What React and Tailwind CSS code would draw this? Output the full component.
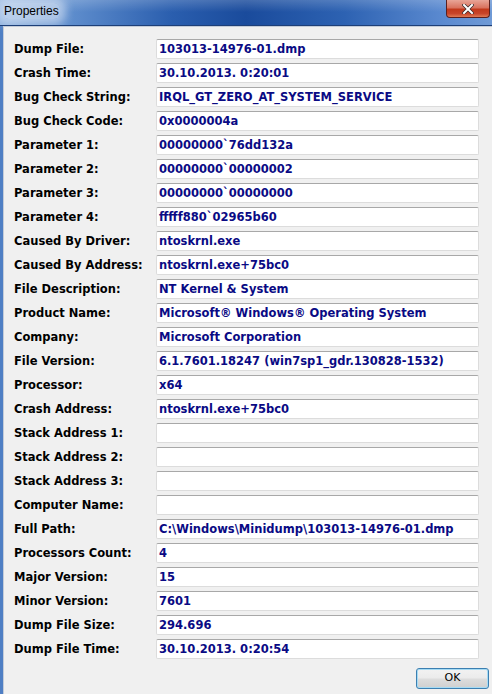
import React from "react";

const rows = [
  ["Dump File:", "103013-14976-01.dmp"],
  ["Crash Time:", "30.10.2013. 0:20:01"],
  ["Bug Check String:", "IRQL_GT_ZERO_AT_SYSTEM_SERVICE"],
  ["Bug Check Code:", "0x0000004a"],
  ["Parameter 1:", "00000000`76dd132a"],
  ["Parameter 2:", "00000000`00000002"],
  ["Parameter 3:", "00000000`00000000"],
  ["Parameter 4:", "fffff880`02965b60"],
  ["Caused By Driver:", "ntoskrnl.exe"],
  ["Caused By Address:", "ntoskrnl.exe+75bc0"],
  ["File Description:", "NT Kernel & System"],
  ["Product Name:", "Microsoft® Windows® Operating System"],
  ["Company:", "Microsoft Corporation"],
  ["File Version:", "6.1.7601.18247 (win7sp1_gdr.130828-1532)"],
  ["Processor:", "x64"],
  ["Crash Address:", "ntoskrnl.exe+75bc0"],
  ["Stack Address 1:", ""],
  ["Stack Address 2:", ""],
  ["Stack Address 3:", ""],
  ["Computer Name:", ""],
  ["Full Path:", "C:\\Windows\\Minidump\\103013-14976-01.dmp"],
  ["Processors Count:", "4"],
  ["Major Version:", "15"],
  ["Minor Version:", "7601"],
  ["Dump File Size:", "294.696"],
  ["Dump File Time:", "30.10.2013. 0:20:54"],
];

export default function App() {
  return (
    <div
      className="w-[492px] h-[694px] overflow-hidden bg-[#4f7fc4] relative"
      style={{ fontFamily: '"DejaVu Sans", Verdana, sans-serif' }}
    >
      {/* Title bar */}
      <div className="h-[26px] relative bg-[linear-gradient(to_right,#8fb2df_0%,#5d8ccc_15%,#2a5eae_35%,#1a4b9c_50%,#2d62b2_70%,#5b8ad0_90%,#6f9ad6_100%)]">
        <div className="absolute inset-x-0 top-0 h-[12px] bg-[linear-gradient(to_bottom,rgba(255,255,255,0.18),rgba(255,255,255,0))]"></div>
        <div
          className="absolute left-[3px] top-[3px] text-[12px] text-black px-[1px] rounded-[6px] shadow-[0_0_8px_6px_rgba(225,235,248,0.55)] bg-[rgba(225,235,248,0.55)] leading-[16px]"
          style={{ fontFamily: '"Liberation Sans", Arial, sans-serif' }}
        >
          Properties
        </div>
        <div className="absolute right-[2px] top-0 w-[44px] h-[18px] rounded-b-[4px] border border-[#5a2020] border-t-0 bg-[linear-gradient(to_bottom,#e8a597_0%,#d9735f_45%,#c2391c_55%,#c8452a_80%,#e07a55_100%)] flex items-center justify-center">
          <svg width="12" height="10" viewBox="0 0 12 10">
            <path d="M2 1 L10 9 M10 1 L2 9" stroke="#3a2a2a" strokeWidth="3.4" strokeLinecap="square" />
            <path d="M2 1 L10 9 M10 1 L2 9" stroke="#ffffff" strokeWidth="2" strokeLinecap="square" />
          </svg>
        </div>
        <div className="absolute inset-x-0 bottom-0 h-[1px] bg-[#1d3f78]"></div>
      </div>

      {/* Client area */}
      <div className="absolute left-[3px] top-[26px] right-0 bottom-0 bg-[#f0f0f0] border-l border-t border-[#c4ccd8] pl-[10px] pt-[10px]">
        <div className="flex flex-col">
          {rows.map(([label, value]) => (
            <div key={label} className="h-[24px] flex items-center">
              <div className="w-[142px] shrink-0 text-[11.5px] font-bold text-black leading-none pt-[1px]">
                {label}
              </div>
              <div className="w-[323px] h-[20px] bg-white border border-[#dcdcdc] border-t-[#a8a8a8] rounded-[2px] flex items-center pl-[2px] pt-[1px] text-[11.5px] font-bold text-[#0a0a84] leading-none whitespace-nowrap overflow-hidden">
                {value}
              </div>
            </div>
          ))}
        </div>
        <div className="flex justify-end w-[475px] mt-[7px]">
          <button
            className="w-[73px] h-[21px] rounded-[3px] border border-[#3c7fb1] bg-[linear-gradient(to_bottom,#f2f2f2_0%,#ebebeb_48%,#dddddd_52%,#cfcfcf_100%)] shadow-[inset_0_0_0_1px_#a6dbf4] text-[11px] text-black flex items-center justify-center"
          >
            OK
          </button>
        </div>
      </div>
    </div>
  );
}
